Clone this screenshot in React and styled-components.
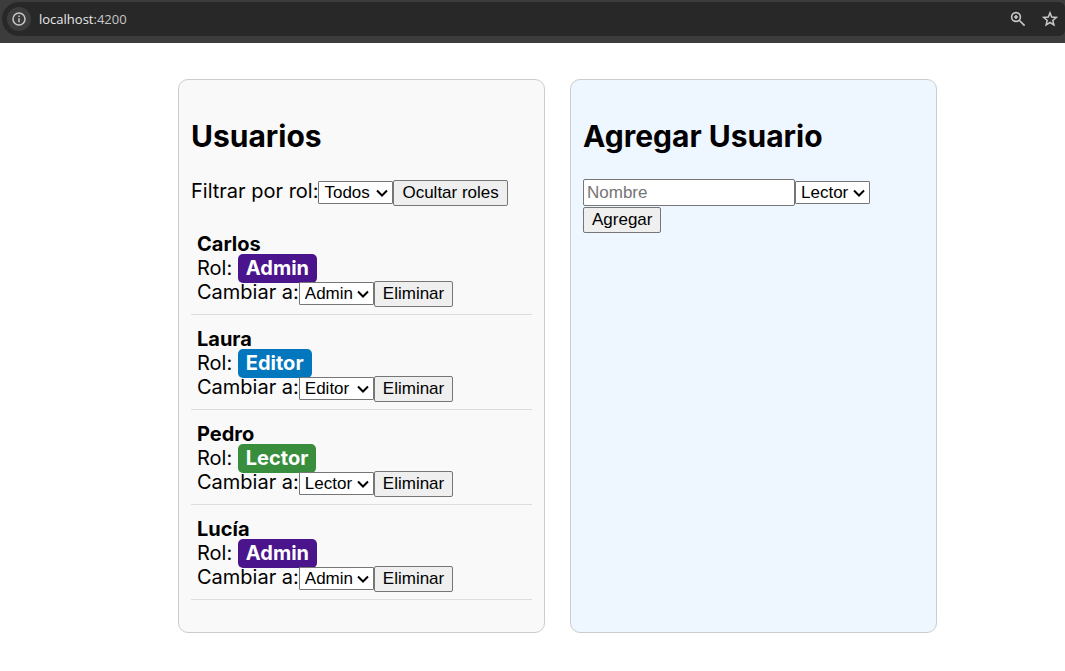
import React from "react";
import styled, { createGlobalStyle } from "styled-components";

const GlobalStyle = createGlobalStyle`
  *, *::before, *::after { box-sizing: border-box; }
  body {
    margin: 0;
    background: #fff;
    color: #000;
    font: 20px/24px Inter, sans-serif;
  }
`;

const BrowserBar = styled.header`
  height: 43px;
  padding: 2px 0 7px 2px;
  background: #3c3c3c;
`;

const AddressBar = styled.div`
  display: flex;
  align-items: center;
  height: 34px;
  padding: 0 7px 0 5px;
  border-radius: 17px 6px 6px 17px;
  background: #282828;
  color: #c7c7c7;
`;

const IconButton = styled.button`
  display: grid;
  place-items: center;
  width: ${(p) => (p.$round ? 24 : 16)}px;
  height: ${(p) => (p.$round ? 24 : 16)}px;
  padding: 0;
  border: 0;
  border-radius: 50%;
  background: ${(p) => (p.$round ? "#3c3c3c" : "transparent")};
  color: inherit;
`;

const Address = styled.div`
  flex: 1;
  padding-left: 8px;
  font: 13px/18px "Open Sans", sans-serif;
  color: #c7c7c7;
`;

const Host = styled.span`
  color: #e8e8e8;
`;

const Actions = styled.div`
  display: flex;
  gap: 16px;
`;

const Page = styled.main`
  display: grid;
  grid-template-columns: 1fr 1fr;
  gap: 25px;
  padding: 36px 128px 38px 178px;
`;

const Card = styled.section`
  padding: 13px 12px 12px;
  border: 1px solid #ccc;
  border-radius: 10px;
  background: ${(p) => p.$background};
`;

const Title = styled.h2`
  margin: 25px 0;
  font-size: 30px;
  line-height: 36px;
  font-weight: 700;
`;

const Controls = styled.div`
  display: flex;
  flex-wrap: wrap;
  align-items: baseline;
`;

const FormControls = styled.form`
  display: flex;
  flex-wrap: wrap;
  align-items: center;
  row-gap: 1px;
`;

const chevron = `url("data:image/svg+xml,%3Csvg xmlns='http://www.w3.org/2000/svg' width='12' height='8' viewBox='0 0 12 8' fill='none' stroke='black' stroke-width='2'%3E%3Cpath d='M1 1.5L6 6.5L11 1.5'/%3E%3C/svg%3E")`;

const Select = styled.select`
  appearance: none;
  width: 75px;
  height: 23px;
  margin: 0;
  padding: 0 0 0 5px;
  border: 1px solid #767676;
  border-radius: 1px;
  background: #fff ${chevron} no-repeat right 4px center;
  color: #000;
  font: 17px "Liberation Sans", sans-serif;
`;

const Button = styled.button`
  height: 26px;
  margin: 0;
  padding: 0 8px;
  border: 1px solid #767676;
  border-radius: 2px;
  background: #efefef;
  color: #000;
  font: 17px "Liberation Sans", sans-serif;
`;

const NameInput = styled.input`
  width: 212px;
  height: 27px;
  margin: 0;
  padding: 1px 3px;
  border: 1px solid #767676;
  border-radius: 2px;
  background: #fff;
  font: 17px "Liberation Sans", sans-serif;

  &::placeholder {
    color: #757575;
  }
`;

const UserList = styled.ul`
  margin: 20px 0;
  padding: 0;
  list-style: none;
`;

const UserItem = styled.li`
  padding: 6px 6px 7px;
  border-bottom: 1px solid #ddd;

  & + & {
    margin-top: 6px;
  }
`;

const Name = styled.strong`
  display: block;
  font-weight: 700;
`;

const Badge = styled.span`
  padding: 2px 8px 3px;
  border-radius: 5px;
  background: ${(p) => p.$color};
  color: #fff;
  font-weight: 700;
`;

const roleColors = { Admin: "#4a148c", Editor: "#0277bd", Lector: "#388e3c" };
const roles = Object.keys(roleColors);
const users = [
  { id: 1, name: "Carlos", role: "Admin" },
  { id: 2, name: "Laura", role: "Editor" },
  { id: 3, name: "Pedro", role: "Lector" },
  { id: 4, name: "Lucía", role: "Admin" },
];

const RoleOptions = () => roles.map((role) => <option key={role}>{role}</option>);

const InfoIcon = () => (
  <svg width="14" height="14" viewBox="0 0 14 14" fill="none" stroke="currentColor" strokeWidth="1.5">
    <circle cx="7" cy="7" r="6" />
    <path d="M7 6.3v4M7 3.6v1.4" />
  </svg>
);

const ZoomIcon = () => (
  <svg width="16" height="16" viewBox="0 0 16 16" fill="none" stroke="currentColor" strokeWidth="1.6">
    <circle cx="6" cy="6" r="4.4" />
    <path d="M9.2 9.2L14.6 14.6M6 4v4M4 6h4" />
  </svg>
);

const StarIcon = () => (
  <svg width="16" height="16" viewBox="0 0 16 16" fill="none" stroke="currentColor" strokeWidth="1.5">
    <path d="M8 1.8L9.7 6l4.6.4-3.5 3 1.1 4.5L8 11.5l-3.9 2.4 1.1-4.5-3.5-3L6.3 6z" />
  </svg>
);

export default function App() {
  return (
    <>
      <GlobalStyle />
      <BrowserBar>
        <AddressBar>
          <IconButton $round aria-label="Información del sitio"><InfoIcon /></IconButton>
          <Address><Host>localhost</Host>:4200</Address>
          <Actions>
            <IconButton aria-label="Zoom"><ZoomIcon /></IconButton>
            <IconButton aria-label="Favoritos"><StarIcon /></IconButton>
          </Actions>
        </AddressBar>
      </BrowserBar>
      <Page>
        <Card $background="#f9f9f9">
          <Title>Usuarios</Title>
          <Controls>
            <label htmlFor="filter">Filtrar por rol:</label>
            <Select id="filter" defaultValue="Todos">
              <option>Todos</option>
              <RoleOptions />
            </Select>
            <Button type="button">Ocultar roles</Button>
          </Controls>
          <UserList>
            {users.map((user) => (
              <UserItem key={user.id}>
                <Name>{user.name}</Name>
                <div>Rol: <Badge $color={roleColors[user.role]}>{user.role}</Badge></div>
                <Controls>
                  <label htmlFor={`role-${user.id}`}>Cambiar a:</label>
                  <Select id={`role-${user.id}`} defaultValue={user.role}>
                    <RoleOptions />
                  </Select>
                  <Button type="button">Eliminar</Button>
                </Controls>
              </UserItem>
            ))}
          </UserList>
        </Card>
        <Card $background="#eef6ff">
          <Title>Agregar Usuario</Title>
          <FormControls onSubmit={(event) => event.preventDefault()}>
            <NameInput type="text" placeholder="Nombre" aria-label="Nombre" />
            <Select aria-label="Rol" defaultValue="Lector">
              <RoleOptions />
            </Select>
            <Button type="submit">Agregar</Button>
          </FormControls>
        </Card>
      </Page>
    </>
  );
}
